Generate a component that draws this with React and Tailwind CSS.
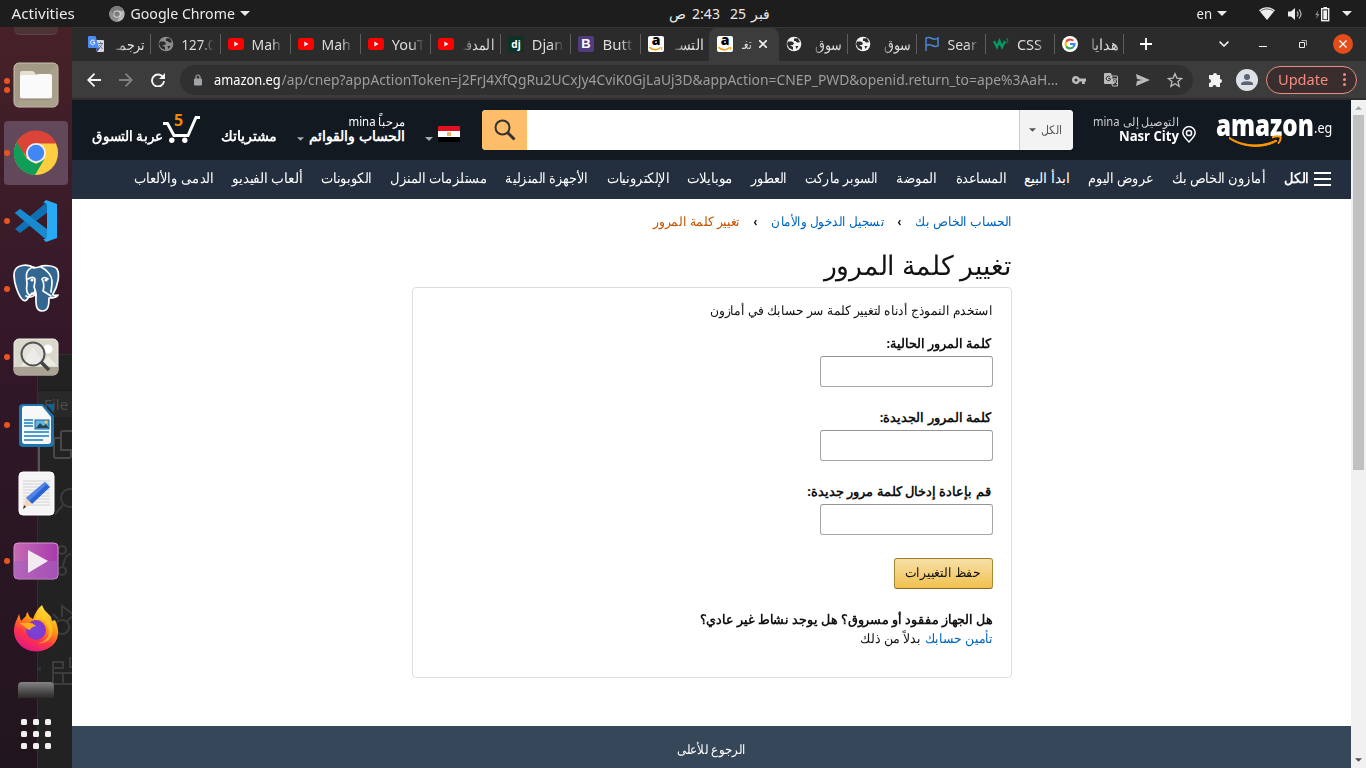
import React, { useLayoutEffect, useRef, useState } from 'react';

const UI = 'font-["Noto_Sans","Open_Sans",sans-serif]';

// Text squeezed or stretched horizontally to the width of its box.
function Fit({ className = '', children, dir = 'rtl' }) {
  const outer = useRef(null);
  const inner = useRef(null);
  const [scale, setScale] = useState(1);
  useLayoutEffect(() => {
    const measure = () => {
      const w = inner.current.offsetWidth;
      if (w) setScale(outer.current.clientWidth / w);
    };
    measure();
    document.fonts.ready.then(measure);
  }, []);
  return (
    <span ref={outer} className={`flex shrink-0 justify-center ${className}`}>
      <span ref={inner} dir={dir} className="shrink-0 whitespace-nowrap" style={{ transform: `scaleX(${scale})` }}>
        {children}
      </span>
    </span>
  );
}

const Caret = ({ className }) => (
  <svg viewBox="0 0 10 5" className={className} fill="currentColor"><path d="M0 0h10L5 5z" /></svg>
);

function ChromeLogo({ className, gray }) {
  const [r, g, y, b] = gray ? ['#7a7a7a', '#8d8d8d', '#b8b8b8', '#7d7d7d'] : ['#db4437', '#0f9d58', '#ffcd40', '#4285f4'];
  return (
    <svg viewBox="0 0 48 48" className={className}>
      <circle cx="24" cy="24" r="23" fill={y} />
      <path d="M24 24H4.1L3.2 14A23 23 0 0 1 44.6 13H24z" fill={r} />
      <path d="M4 12.5 14.5 30 24 35.5 33 30 23 47A23 23 0 0 1 4 12.5z" fill={g} />
      <path d="M4 12.5A23 23 0 0 1 44.6 14H24L14.5 29z" fill={r} />
      <circle cx="24" cy="24" r="10.5" fill="#f1f1f1" />
      <circle cx="24" cy="24" r="8.5" fill={b} />
    </svg>
  );
}

function TopBar() {
  return (
    <div className={`flex h-[27px] shrink-0 items-center bg-[#1d1d1d] text-[14px] text-[#eaeaea] ${UI}`}>
      <Fit dir="ltr" className="ml-3 w-[63px]">Activities</Fit>
      <ChromeLogo gray className="ml-[34px] h-4 w-4" />
      <Fit dir="ltr" className="ml-[6px] w-[104px]">Google Chrome</Fit>
      <Caret className="ml-[5px] h-[5px] w-[10px]" />
      <div className="ml-[419px] flex items-center">
        <Fit className="w-[17px]">ص</Fit>
        <Fit dir="ltr" className="ml-[6px] w-[28px]">2:43</Fit>
        <Fit dir="ltr" className="ml-[10px] w-[16px]">25</Fit>
        <Fit className="ml-[5px] w-[19px]">فبر</Fit>
      </div>
      <Fit dir="ltr" className="ml-[426px] w-[16px]">en</Fit>
      <Caret className="ml-[5px] h-[5px] w-[10px]" />
      <svg viewBox="0 0 16 13" className="ml-[32px] h-[13px] w-4"><path d="M8 13 0 3.2C4.5-.7 11.500-.7 16 3.200z" fill="#eee" /><path d="M1.300 4.300c4-3.100 9.400-3.100 13.400 0" stroke="#444" fill="none" strokeWidth=".8" /></svg>
      <svg viewBox="0 0 16 14" className="ml-[12px] h-[14px] w-4"><path d="M1 4.500h3L8 1v12L4 9.500H1z" fill="#eee" /><path d="M10 4.500q2 2.500 0 5M12 2.500q4 4.500 0 9" fill="none" stroke="#aaa" strokeWidth="1.300" /></svg>
      <svg viewBox="0 0 15 16" className="ml-[12px] h-4 w-[15px]"><path d="M3.500 4 0 9h2l-.8 4L4.500 8h-2z" fill="#888" /><rect x="6.700" y="2.700" width="7" height="12" fill="none" stroke="#eee" strokeWidth="1.400" /><rect x="8.300" y="4.300" width="3.800" height="9" fill="#eee" /><path d="M8.500 1h3.500v1.500H8.500z" fill="#eee" /></svg>
      <Caret className="ml-[12px] h-[5px] w-[10px]" />
    </div>
  );
}

function DockItem({ dots = 0, active, children }) {
  return (
    <div className="flex h-[68px] w-[72px] shrink-0 items-center">
      <div className={`ml-1 flex h-16 w-16 items-center rounded ${active ? 'bg-[#63475a]' : ''}`}>
        <div className="flex w-[6px] flex-col gap-[3px]">
          {Array.from({ length: dots }, (_, i) => <i key={i} className="block h-[6px] w-[6px] rounded-full bg-[#e95420]" />)}
        </div>
        <div className="ml-[-1px] flex w-[54px] items-center justify-center">{children}</div>
      </div>
    </div>
  );
}

function Dock() {
  return (
    <div className="relative h-full w-[72px] shrink-0 overflow-hidden bg-linear-to-b from-[#472127] via-[#321729] via-45% to-[#21151d]">
      <div className={`absolute top-[327px] left-[37px] h-[414px] w-[35px] border-t border-l border-[#303030] bg-[#222222] text-[#4c4c4c] ${UI}`}>
        <div className="h-[36px] border-b border-[#1b1b1b]" />
        <div className="flex h-[26px] items-center bg-[#292929] pl-[6px]"><Fit dir="ltr" className="w-[24px] text-[14px]">File</Fit></div>
        <svg className="h-[300px] w-[35px]" viewBox="0 0 35 300" fill="none" stroke="#3c3c3c" strokeWidth="2">
          <path d="M1 0v60" stroke="#555" /><path d="M35 14H25q-2 0-2 2v17h12M23 21h-5q-2 0-2 2v16q0 2 2 2h13q2 0 2-2v-5" stroke="#484848" />
          <circle cx="32" cy="81" r="9" /><path d="m25 88-8 9M24 129a4 4 0 1 0 .1 0M24 150a4 4 0 1 0 .1 0M33 137q-6 0-8 12M24 200v-11l12 9M24 203a7 7 0 1 0 .1 0M15 197l5 5M15 218l5-4M29 204l6-5M15 251h10v-6H15v22h20M15 256h20M25 256v12M32 240v10h5" />
          <path d="M0 250h3v4H0z" fill="#26323b" stroke="none" />
        </svg>
      </div>
      <div className="relative flex h-full flex-col">
        <div className="ml-[14px] h-2 w-[44px] shrink-0 rounded-b-md border-b border-[#5b4549] bg-[#4b3336]" />
        <div className="mt-[16px] flex flex-col">
          <DockItem dots={2}>
            <svg viewBox="0 0 46 46" className="h-[46px] w-[46px]"><rect x="1" y="1" width="44" height="44" rx="5" fill="#a39a85" stroke="#c9c3b2" /><path d="M1 44 45 2v38q0 5-5 5H5z" fill="#aea791" opacity=".6" /><path d="M7 16V11q0-2 2-2h10q2 0 3 2l2 3H37z" fill="#e6dfd3" /><path d="M9 13h13q2 0 3-1h12q2 0 2 2v20q0 3-3 3H10q-3 0-3-3V15q0-2 2-2z" fill="#fafafa" /><path d="M8 37h30" stroke="#847c69" /></svg>
          </DockItem>
          <DockItem dots={1} active><ChromeLogo className="h-[46px] w-[46px]" /></DockItem>
          <DockItem dots={1}>
            <svg viewBox="0 0 44 44" className="h-[44px] w-[44px]"><path d="m1 14 5-4 28 21v11z" fill="#2489ca" /><path d="m1 30 5 4L34 13V2z" fill="#1070b3" /><path d="m1 14 5-4 28 21v11z" fill="#1989d0" /><path d="m32 1 11 4v34l-11 4-3-3q4 1 4-3V7q0-4-4-3z" fill="#29aaf4" /></svg>
          </DockItem>
          <DockItem dots={1}>
            <svg viewBox="0 0 48 50" className="h-[50px] w-[48px]" fill="#336791" stroke="#fff" strokeWidth="1.700" strokeLinejoin="round" strokeLinecap="round">
              <path d="M22 4C17 0 2-1 2 11c0 9 5 22 9 25q3 2 5-2l4-5 4 1c0 8-1 17 6 17 6 0 7-5 7-13 4 0 8-1 9-3-3 1-6 0-5-1C46 22 48 10 45 5 42 1 31 1 27 3z" />
              <path d="M22 3C13 5 14 12 15 19c0 4-2 8 2 12q5 0 6-4M29 3c7 3 11 10 11 14 0 6-1 9-1 11M16 15q5-3 7 0 0 4-1 8 2 4 2 9M36 15q-4-3-6 0 3 5 1 12l8 5M14 32q5 3 10-2" fill="none" />
              <circle cx="20" cy="16" r=".7" /><circle cx="34" cy="16" r=".7" />
            </svg>
          </DockItem>
          <DockItem dots={1}>
            <svg viewBox="0 0 46 38" className="h-[38px] w-[46px]"><rect x="1" y="1" width="44" height="36" rx="5" fill="#d9d8ca" stroke="#f2f0e7" /><path d="M8 28 20 9l12 19zM26 28l9-10 9 10z" fill="#ecebe2" /><circle cx="35" cy="11" r="4.500" fill="#fff" /><path d="M1 29h44v4q0 4-4 4H5q-4 0-4-4z" fill="#aaa393" /><circle cx="20" cy="16" r="11.500" fill="#eee" fillOpacity=".5" stroke="#555" strokeWidth="2" /><path d="m28 24 8 8" stroke="#444" strokeWidth="3.500" /></svg>
          </DockItem>
          <DockItem dots={1}>
            <svg viewBox="0 0 37 45" className="h-[45px] w-[37px]"><path d="M5 1h20l11 12v27q0 4-4 4H5q-4 0-4-4V5q0-4 4-4z" fill="#1d73ad" /><path d="M6 3h18l9 11v24q0 3-3 3H7q-3 0-3-3V6q0-3 2-3z" fill="#f8f8f8" /><path d="M28 1h8v9z" fill="#116096" /><path d="M6 17h9M6 20h9M6 23h9M6 29h25M6 33h25M6 37h19" stroke="#1680be" strokeWidth="1.700" /><rect x="17" y="17" width="14" height="9" fill="#62b4e3" stroke="#126299" /><path d="m18 25 4-5 3 3 3-2 3 4z" fill="#274654" /><circle cx="28" cy="19" r="1.500" fill="#fc3" /></svg>
          </DockItem>
          <DockItem>
            <svg viewBox="0 0 37 45" className="h-[45px] w-[37px]"><rect x="1" y="1" width="35" height="43" rx="4" fill="#f5f5f5" stroke="#fff" /><path d="M5 10h27M5 13h27M5 16h27M5 19h27M5 22h27M5 25h27M5 28h27M5 31h27M5 34h27" stroke="#d2d2d2" /><path d="m27 11 5 5-18 17-6-6z" fill="#2964d5" /><path d="m27 11 2 2-18 17-3-3z" fill="#5185e6" /><path d="m8 27 6 6-9 5z" fill="#f2d8b7" /><path d="m6 34 2 2-3 2z" fill="#333" /></svg>
          </DockItem>
          <DockItem dots={1}>
            <svg viewBox="0 0 46 38" className="h-[38px] w-[46px]"><defs><linearGradient id="vid" x2="1"><stop stopColor="#c66bb4" /><stop offset="1" stopColor="#a83aae" /></linearGradient></defs><rect x="1" y="1" width="44" height="36" rx="4" fill="url(#vid)" stroke="#d993ce" /><path d="M1 19h44v14q0 4-4 4H5q-4 0-4-4z" fill="#a560bd" opacity=".6" /><path d="m15 8 20 11-20 12z" fill="#f3e9f3" /></svg>
          </DockItem>
          <DockItem>
            <svg viewBox="0 0 46 48" className="mb-[2px] h-[48px] w-[46px]"><defs><linearGradient id="fox" x1=".8" y1="0" x2=".3" y2="1"><stop stopColor="#fff44f" /><stop offset=".4" stopColor="#ff980e" /><stop offset=".7" stopColor="#ff3647" /><stop offset="1" stopColor="#e31587" /></linearGradient><radialGradient id="globe"><stop stopColor="#7047dc" /><stop offset="1" stopColor="#8b36c8" /></radialGradient></defs><path d="M29 1c2 6 6 8 9 12l1 4 3-1c4 8 5 18-2 25-10 9-25 8-33 0C-1 33 0 23 4 15l2-5 2 7 5-5q0-3 2-4 0 5 5 7 3-9 9-14z" fill="url(#fox)" /><circle cx="23" cy="26" r="10" fill="url(#globe)" /><path d="M14 19q5-1 9 3-5 1-6 4-4-1-6-4-4-2-4-3z" fill="#ffad1c" /><path d="M22 16c5-2 11 0 12 6 5 7 0 17-10 17 10 2 18-7 15-17-2-5-6-10-10-18-4 3-6 8-7 12z" fill="#ffcf2d" opacity=".65" /></svg>
          </DockItem>
        </div>
        <div className="mt-[19px] ml-[18px] h-[16px] w-[36px] shrink-0 rounded-t bg-linear-to-b from-[#858585] to-[#2c2a2b]" />
        <div className="mt-[21px] ml-[21px] grid w-[30px] grid-cols-3 gap-[6px]">
          {Array.from({ length: 9 }, (_, i) => <i key={i} className="block h-[6px] w-[6px] rounded-[1.500px] bg-[#f2f1ef]" />)}
        </div>
      </div>
    </div>
  );
}

const Globe = ({ c = '#f1f3f4', h = '#2b2b2b' }) => (
  <svg viewBox="0 0 16 16" className="h-4 w-4 shrink-0"><circle cx="8" cy="8" r="7.300" fill={c} /><path d="M2 5.500h4l2 1.500-1 2H4l3 2v3l-4-2-2-4zM8 2.500l4-.3 2 4-3 .3-1.500-1.500L8 5z" fill={h} /><path d="M9.500 10h3l-2 3z" fill={h} /></svg>
);
const YouTube = () => <svg viewBox="0 0 16 12" className="h-3 w-4 shrink-0"><rect width="16" height="12" rx="3" fill="#f00" /><path d="m6.300 3.500 4.200 2.500-4.200 2.500z" fill="#fff" /></svg>;
const AmazonA = () => (
  <span className="flex h-4 w-4 shrink-0 flex-col items-center rounded-[2px] bg-white">
    <b className='-mt-[3px] h-[14px] font-["Open_Sans",sans-serif] text-[14px] leading-[14px] font-extrabold text-black'>a</b>
    <svg viewBox="0 0 14 5" className="h-[5px] w-[14px]"><path d="M0 0q6 5 11 1" fill="none" stroke="#f90" strokeWidth="1.500" /><path d="M10 0h3l-.5 3" fill="none" stroke="#f90" /></svg>
  </span>
);
const GoogleG = () => (
  <svg viewBox="0 0 16 16" className="h-4 w-4 shrink-0"><circle cx="8" cy="8" r="8" fill="#fff" /><g fill="none" strokeWidth="2.200"><path d="M4.200 5.700A4.500 4.500 0 0 1 11.200 4.800" stroke="#ea4335" /><path d="M4.200 5.700a4.500 4.500 0 0 0 0 4.600" stroke="#fbbc05" /><path d="M4.200 10.300a4.500 4.500 0 0 0 6.800 1" stroke="#34a853" /><path d="M11 11.300A4.500 4.500 0 0 0 12.500 8H8" stroke="#4285f4" /></g></svg>
);
const Translate = () => (
  <svg viewBox="0 0 16 16" className="h-4 w-4 shrink-0"><path d="M6 4h9q1 0 1 1v10q0 1-1 1H9z" fill="#d6d8db" /><path d="M1 0h6.500L11 12H1q-1 0-1-1V1q0-1 1-1z" fill="#4c8bf5" /><path d="m8 12 1 4 3-4z" fill="#3952b0" /><path d="M7 6.500H4.700M6.600 5A2.300 2.300 0 1 0 7 7" fill="none" stroke="#fff" /><path d="M10 7.500h5M12.500 6v1.500M14 8q-1 3-3.500 4.500M11 9l3.500 4" fill="none" stroke="#607080" strokeWidth=".9" /></svg>
);
const Dj = () => <span className="flex h-4 w-4 shrink-0 items-center justify-center bg-[#0c3326] text-[10px] leading-none font-bold text-white">dj</span>;
const Boot = () => <span className='flex h-4 w-4 shrink-0 items-center justify-center rounded-[2px] bg-[#533b80] font-["Liberation_Sans",sans-serif] text-[13px] leading-none font-bold text-white'>B</span>;
const Flag = () => <svg viewBox="0 0 16 16" className="h-4 w-4 shrink-0" fill="none" stroke="#4a86d8" strokeWidth="1.500"><path d="M2 15V2q3-1 6 .5t6-.5v8q-3 1-6-.5T2 10" /></svg>;
const W3 = () => <svg viewBox="0 0 16 12" className="h-3 w-4 shrink-0"><path d="m1 3 3 6 2.500-6L9 9l3-6" fill="none" stroke="#059862" strokeWidth="2.400" /><path d="M13 1h2l-1 1.500q1.500 0 1 1.500t-2 .5" fill="none" stroke="#059862" strokeWidth=".8" /></svg>;

const tabsA = [
  [Translate, 'ترجمـ', 1, 'w-[29px]'], [() => <Globe c="#8b8d8f" />, '127.0', 0, 'w-[34px]'], [YouTube, 'Mah', 0, 'w-[29px]'], [YouTube, 'Mah', 0, 'w-[29px]'],
  [YouTube, 'YouT', 0, 'w-[33px]'], [YouTube, 'المدفـ', 1, 'w-[31px]'], [Dj, 'Djan', 0, 'w-[31px]'], [Boot, 'Butt', 0, 'w-[30px]'], [AmazonA, 'التسـ', 1, 'w-[29px]'],
];
const tabsB = [[Globe, 'سوق', 1, 'w-[28px]'], [Globe, 'سوق', 1, 'w-[28px]'], [Flag, 'Sear', 0, 'w-[29px]'], [W3, 'CSS', 0, 'w-[25px]'], [GoogleG, 'هدايا', 1, 'w-[28px]']];

function Tab({ tab: [Icon, label, rtl, width], narrow, last }) {
  return (
    <div className={`flex shrink-0 items-center pl-[7px] ${narrow ? 'w-[69px]' : 'w-[70px]'}`}>
      <Icon />
      <div className={`ml-[8px] flex w-[32px] ${rtl ? 'justify-end mask-l-from-60%' : 'mask-r-from-60%'}`}>
        <Fit dir={rtl ? 'rtl' : 'ltr'} className={`text-[14.500px] leading-[22px] ${width}`}>{label}</Fit>
      </div>
      <i className={`ml-auto block h-5 w-px ${last ? 'bg-transparent' : 'bg-[#5e5e5e]'}`} />
    </div>
  );
}

function Chrome() {
  return (
    <div className={UI}>
      <div className="flex h-[34px] items-stretch border-t border-[#353535] bg-[#2b2b2b] pb-[2px] pl-[9px] text-[#dcdcdc]">
        {tabsA.map((t, i) => <Tab key={i} tab={t} last={i === 8} />)}
        <div className="-mb-[2px] -ml-[2px] flex w-[70px] shrink-0 items-center rounded-t-lg bg-[#3c3c3c] pb-[2px] pl-2">
          <AmazonA />
          <Fit className="ml-[8px] w-[10px] text-[14px] leading-[22px]">تغـ</Fit>
          <svg viewBox="0 0 8 8" className="ml-[8px] h-2 w-2"><path d="m0 0 8 8M8 0 0 8" stroke="#eee" strokeWidth="1.600" /></svg>
        </div>
        {tabsB.map((t, i) => <Tab key={i} tab={t} narrow />)}
        <div className="ml-[16px] flex items-center">
          <svg viewBox="0 0 12 12" className="h-3 w-3"><path d="M6 0v12M0 6h12" stroke="#fff" strokeWidth="1.800" /></svg>
          <svg viewBox="0 0 10 6" className="ml-[67px] h-[6px] w-[10px]"><path d="m.6.600 4.400 4.400L9.400.600" fill="none" stroke="#eee" strokeWidth="1.600" /></svg>
          <i className="mt-[5px] ml-[30px] block h-px w-2 bg-white" />
          <svg viewBox="0 0 8 8" className="ml-[32px] h-2 w-2" fill="none" stroke="#eee"><path d="M.5 2.500h5v5h-5z" /><path d="M2.500.500h5v5" stroke="#aaa" /></svg>
          <span className="ml-[26px] flex h-5 w-5 items-center justify-center rounded-full bg-[#e24d1b]"><svg viewBox="0 0 8 8" className="h-2 w-2"><path d="m.5.500 7 7M7.500.500l-7 7" stroke="#fff" strokeWidth="1.300" /></svg></span>
        </div>
      </div>
      <div className="flex h-[39px] items-center border-b-2 border-[#2e2d2b] bg-[#3c3c3c]">
        <svg viewBox="0 0 14 14" className="ml-[15px] h-[14px] w-[14px]" fill="none" stroke="#f3f3f3" strokeWidth="1.800"><path d="M14 7H1M7.500.700 1.200 7l6.300 6.300" /></svg>
        <svg viewBox="0 0 14 14" className="ml-[18px] h-[14px] w-[14px]" fill="none" stroke="#818181" strokeWidth="1.800"><path d="M0 7h13M6.500.700 12.800 7l-6.300 6.300" /></svg>
        <svg viewBox="0 0 14 14" className="ml-[18px] h-[14px] w-[14px]"><path d="M12.200 4.500A6 6 0 1 0 13 8" fill="none" stroke="#f3f3f3" strokeWidth="1.900" /><path d="M14 0v6H8z" fill="#f3f3f3" /></svg>
        <div className="ml-[15px] flex h-[30px] w-[1013px] items-center rounded-full bg-[#303030] text-[#9d9d9d]">
          <svg viewBox="0 0 8 12" className="ml-[14px] h-3 w-2"><rect y="4.500" width="8" height="7" rx="1" fill="#a1a4a9" /><path d="M2 5V3a2 2 0 0 1 4 0v2" fill="none" stroke="#a1a4a9" strokeWidth="1.200" /></svg>
          <div className="ml-[12px] flex text-[14px]">
            <Fit dir="ltr" className="w-[67px] text-white">amazon.eg</Fit>
            <Fit dir="ltr" className="w-[777px]">/ap/cnep?appActionToken=j2FrJ4XfQgRu2UCxJy4CviK0GjLaUj3D&amp;appAction=CNEP_PWD&amp;openid.return_to=ape%3AaH…</Fit>
          </div>
          <svg viewBox="0 0 14 8" className="ml-[14px] h-2 w-[14px]" fill="#bbb"><path fillRule="evenodd" d="M4 0a4 4 0 0 1 3.700 2.500H14V5.500h-1.200V8H10V5.500H7.700A4 4 0 1 1 4 0zm0 2.500a1.500 1.500 0 1 0 0 3 1.500 1.500 0 0 0 0-3z" /></svg>
          <svg viewBox="0 0 14 14" className="ml-[18px] h-[14px] w-[14px]"><path d="M1 0h6l3.500 11H1q-1 0-1-1V1q0-1 1-1z" fill="#bbb" /><path d="M8 3h5q.5 0 .5.500v9.500H8.500L8 11" fill="none" stroke="#bbb" /><path d="M6.500 5.500H4.300M6 4a2.200 2.200 0 1 0 .5 2" fill="none" stroke="#333" /><path d="M9 6h4M11 5v1M12.500 6.500 10 10M10 7l3 4" stroke="#bbb" fill="none" /></svg>
          <svg viewBox="0 0 14 12" className="ml-[18px] h-3 w-[14px]" fill="#bbb"><path d="M0 0l14 6-14 6 1-5 5-1-5-1z" /></svg>
          <svg viewBox="0 0 24 24" className="ml-[17px] h-4 w-4" fill="none" stroke="#bbb" strokeWidth="2"><path d="m12 2.500 2.800 6.600 7.200.6-5.500 4.700 1.700 7L12 17.700 5.800 21.400l1.700-7L2 9.700l7.200-.6z" /></svg>
        </div>
        <svg viewBox="0 0 15 15" className="ml-[15px] h-[15px] w-[15px]" fill="#f2f2f2"><path d="M1 3h4a2 2 0 1 1 4 0h3v4a2 2 0 1 1 0 4v4H8.500a2 2 0 0 0-4 0H1v-4a2 2 0 0 0 0-4z" /></svg>
        <svg viewBox="0 0 22 22" className="ml-[13px] h-[22px] w-[22px]"><circle cx="11" cy="11" r="11" fill="#dee1e6" /><circle cx="11" cy="8" r="3" fill="#5a6478" /><path d="M5 16v-1q0-2.700 6-2.700t6 2.700v1z" fill="#5a6478" /></svg>
        <div className="ml-[8px] flex h-[28px] w-[91px] items-center rounded-full border border-[#ee8c82] bg-[#3a2d2d] text-[#f28b82]">
          <Fit dir="ltr" className="ml-[11px] w-[50px] text-[14px]">Update</Fit>
          <div className="ml-[15px] flex flex-col gap-[2px]"><i className="h-[3px] w-[3px] rounded-full bg-[#f28b82]" /><i className="h-[3px] w-[3px] rounded-full bg-[#f28b82]" /><i className="h-[3px] w-[3px] rounded-full bg-[#f28b82]" /></div>
        </div>
      </div>
    </div>
  );
}

function AmazonHeader() {
  return (
    <div className="flex h-[60px] shrink-0 bg-[#131921] text-white">
      <Fit className="mt-[24px] ml-5 h-6 w-[71px] text-[14px] leading-6 font-bold">عربة التسوق</Fit>
      <div className="relative mt-[9px] h-[34px] w-[37px]">
        <svg viewBox="0 0 37 34" className="h-[34px] w-[37px]"><path d="M0 14.500h4.500l6.500 12h14L33 8.500h4" fill="none" stroke="#fff" strokeWidth="3" /><circle cx="8.800" cy="31.300" r="2.700" fill="#fff" /><circle cx="21.800" cy="31.300" r="2.700" fill="#fff" /></svg>
        <b className='absolute top-[1px] left-[11px] font-["Open_Sans",sans-serif] text-[16px] leading-5 text-[#f08804]'>5</b>
      </div>
      <Fit className="mt-[24px] ml-[20px] h-6 w-[57px] text-[14px] leading-6 font-bold">مشترياتك</Fit>
      <Caret className="mt-[37px] ml-[20px] h-[4px] w-[7px] text-[#a7acb2]" />
      <div className="mt-[14px] ml-[5px] flex w-[96px] flex-col items-end">
        <Fit className="h-[15px] w-[57px] text-[12px] leading-[15px]">مرحباً mina</Fit>
        <Fit className="h-[14px] w-[96px] text-[14px] leading-[14px] font-bold">الحساب والقوائم</Fit>
      </div>
      <Caret className="mt-[37px] ml-[20px] h-[4px] w-[8px] text-[#a7acb2]" />
      <div className="mt-[26px] ml-[5px] flex h-4 w-[22px] flex-col overflow-hidden rounded-[1px]">
        <i className="h-[5px] bg-[#e01020]" /><i className="flex h-[6px] items-center justify-center bg-white"><i className="h-1 w-1 bg-[#dfbd62]" /></i><i className="h-[5px] bg-black" />
      </div>
      <div className="mt-[10px] ml-[22px] flex h-[40px] w-[591px] shrink-0 overflow-hidden rounded bg-white">
        <div className="flex w-[45px] items-center justify-center bg-[#febd69]"><svg viewBox="0 0 22 22" className="h-[22px] w-[22px]" fill="none" stroke="#333"><circle cx="8.500" cy="8.500" r="7" strokeWidth="2" /><path d="m13.500 13.500 7 7" strokeWidth="3" /></svg></div>
        <div className="ml-auto flex w-[54px] items-center border-l border-[#cdcdcd] bg-[#f3f3f3] text-[#555]">
          <Caret className="ml-[9px] h-[4px] w-[7px]" /><Fit className="ml-[5px] w-[21px] text-[12px]">الكل</Fit>
        </div>
      </div>
      <div className="mt-[14px] ml-[20px] flex w-[86px] flex-col items-end">
        <Fit className="h-[15px] w-[86px] text-[12px] leading-[15px] text-[#ccc]">التوصيل إلى mina</Fit>
        <Fit dir="ltr" className='h-[14px] w-[60px] font-["Open_Sans",sans-serif] text-[14px] leading-[14px] font-bold'>Nasr City</Fit>
      </div>
      <svg viewBox="0 0 14 17" className="mt-[26px] ml-[3px] h-[17px] w-[14px]" fill="none" stroke="#fff" strokeWidth="1.500"><path d="M7 16C3 12 .8 9.500.8 6.800a6.200 6.200 0 0 1 12.400 0C13.200 9.500 11 12 7 16z" /><circle cx="7" cy="7" r="2.600" /></svg>
      <div className="relative mt-[10px] ml-[20px] h-[40px] w-[97px]">
        <Fit dir="ltr" className='h-[34px] w-[98px] font-["Open_Sans",sans-serif] text-[30px] leading-[30px] font-extrabold'>amazon</Fit>
        <svg viewBox="0 0 54 14" className="absolute top-[25px] left-[13px] h-[14px] w-[54px]"><path d="M0 2c14 10 34 10 47 3l1 1C35 14 14 13 0 3.500z" fill="#f90" stroke="#f90" /><path d="M43 2.500q5-2 8.500-.8.700 3.500-2.500 7" fill="none" stroke="#f90" strokeWidth="2" /></svg>
      </div>
      <Fit dir="ltr" className="mt-[18px] ml-[1px] h-5 w-[18px] text-[14px] leading-5">.eg</Fit>
    </div>
  );
}

const nav = [
  ['أمازون الخاص بك', 'w-[94px]'], ['عروض اليوم', 'w-[66px]'], ['ابدأ البيع', 'w-[46px]'], ['المساعدة', 'w-[51px]'],
  ['الموضة', 'w-[41px]'], ['السوبر ماركت', 'w-[73px]'], ['العطور', 'w-[36px]'], ['موبايلات', 'w-[46px]'], ['الإلكترونيات', 'w-[63px]'],
  ['الأجهزة المنزلية', 'w-[83px]'], ['مستلزمات المنزل', 'w-[97px]'], ['الكوبونات', 'w-[51px]'], ['ألعاب الفيديو', 'w-[71px]'], ['الدمى والألعاب', 'w-[80px]'],
];

function Field({ label, width }) {
  return (
    <div className="mb-[20px] flex flex-col items-start">
      <Fit className={`mr-[2px] h-[23px] text-[13px] leading-[21px] font-bold ${width}`}>{label}</Fit>
      <input className="h-[31px] w-[173px] rounded-[3px] border border-[#a6a6a6] border-t-[#949494] bg-white" />
    </div>
  );
}

// The separator mirrors with the right-to-left reading order.
const Crumb = () => <Fit className="mr-[14px] w-[4px] font-bold text-[#111]">›</Fit>;

export default function App() {
  return (
    <div className="flex h-[768px] w-[1366px] flex-col overflow-hidden bg-white">
      <TopBar />
      <div className="flex min-h-0 flex-1">
        <Dock />
        <div className="flex min-w-0 flex-1 flex-col">
          <Chrome />
          <div className={`flex min-h-0 flex-1 ${UI}`}>
            <div className="flex w-[1279px] flex-col">
              <AmazonHeader />
              <div dir="rtl" className="flex h-[39px] shrink-0 items-center gap-[18px] bg-[#232f3e] pr-5 pb-[3px] text-[13.500px] text-white">
                <div className="flex items-center gap-[5px]">
                  <div className="mt-[2px] flex w-[17px] flex-col gap-[4px]"><i className="h-[2px] bg-white" /><i className="h-[2px] bg-white" /><i className="h-[2px] bg-white" /></div>
                  <Fit className="w-[25px] font-bold">الكل</Fit>
                </div>
                {nav.map(([t, w]) => <Fit key={t} className={w}>{t}</Fit>)}
              </div>
              <main dir="rtl" className="mr-[339px] ml-auto h-[527px] w-[600px] text-[13px] text-[#111]">
                <div className="flex h-[45px] items-center leading-[19px] text-[#0066c0]">
                  <Fit className="w-[97px]">الحساب الخاص بك</Fit>
                  <Crumb />
                  <Fit className="mr-[13px] w-[113px]">تسجيل الدخول والأمان</Fit>
                  <Crumb />
                  <Fit className="mr-[13px] w-[87px] text-[#c45500]">تغيير كلمة المرور</Fit>
                </div>
                <h1 className="flex h-[43px] items-center pb-[1px]"><Fit className="w-[188px] text-[27px] leading-[36px] font-normal">تغيير كلمة المرور</Fit></h1>
                <section className="flex h-[391px] flex-col items-start rounded border border-[#ddd] pt-[12px] pr-[18px]">
                  <Fit className="h-[33px] w-[283px] leading-[20px]">استخدم النموذج أدناه لتغيير كلمة سر حسابك في أمازون</Fit>
                  <Field label="كلمة المرور الحالية:" width="w-[104px]" />
                  <Field label="كلمة المرور الجديدة:" width="w-[111px]" />
                  <Field label="قم بإعادة إدخال كلمة مرور جديدة:" width="w-[184px]" />
                  <button className="mt-[3px] flex h-[31px] w-[99px] items-center justify-center rounded-[3px] border border-[#a88734] border-t-[#9c7e31] border-b-[#846a29] bg-linear-to-b from-[#f7dfa5] to-[#f0c14b] pr-[1px] pb-[3px]"><Fit className="w-[75px] leading-[20px]">حفظ التغييرات</Fit></button>
                  <Fit className="mt-[20px] h-[19px] w-[293px] leading-[20px] font-bold">هل الجهاز مفقود أو مسروق؟ هل يوجد نشاط غير عادي؟</Fit>
                  <div className="flex gap-[4px] leading-[20px]"><Fit className="w-[68px] text-[#0066c0]">تأمين حسابك</Fit><Fit className="w-[61px]">بدلاً من ذلك</Fit></div>
                </section>
              </main>
              <footer className="flex flex-1 items-center justify-center bg-[#37475a] pt-[5px] text-[13px] text-white"><Fit className="w-[69px]">الرجوع للأعلى</Fit></footer>
            </div>
            <div className="flex w-[15px] flex-col items-center bg-[#f1f1f1] text-[#505050]">
              <Caret className="mt-[6px] h-[4px] w-[7px] rotate-180 text-[#a3a3a3]" />
              <div className="mt-[5px] h-[355px] w-[11px] bg-[#c1c1c1]" />
              <Caret className="mt-auto mb-[6px] h-[4px] w-[7px]" />
            </div>
          </div>
        </div>
      </div>
    </div>
  );
}
